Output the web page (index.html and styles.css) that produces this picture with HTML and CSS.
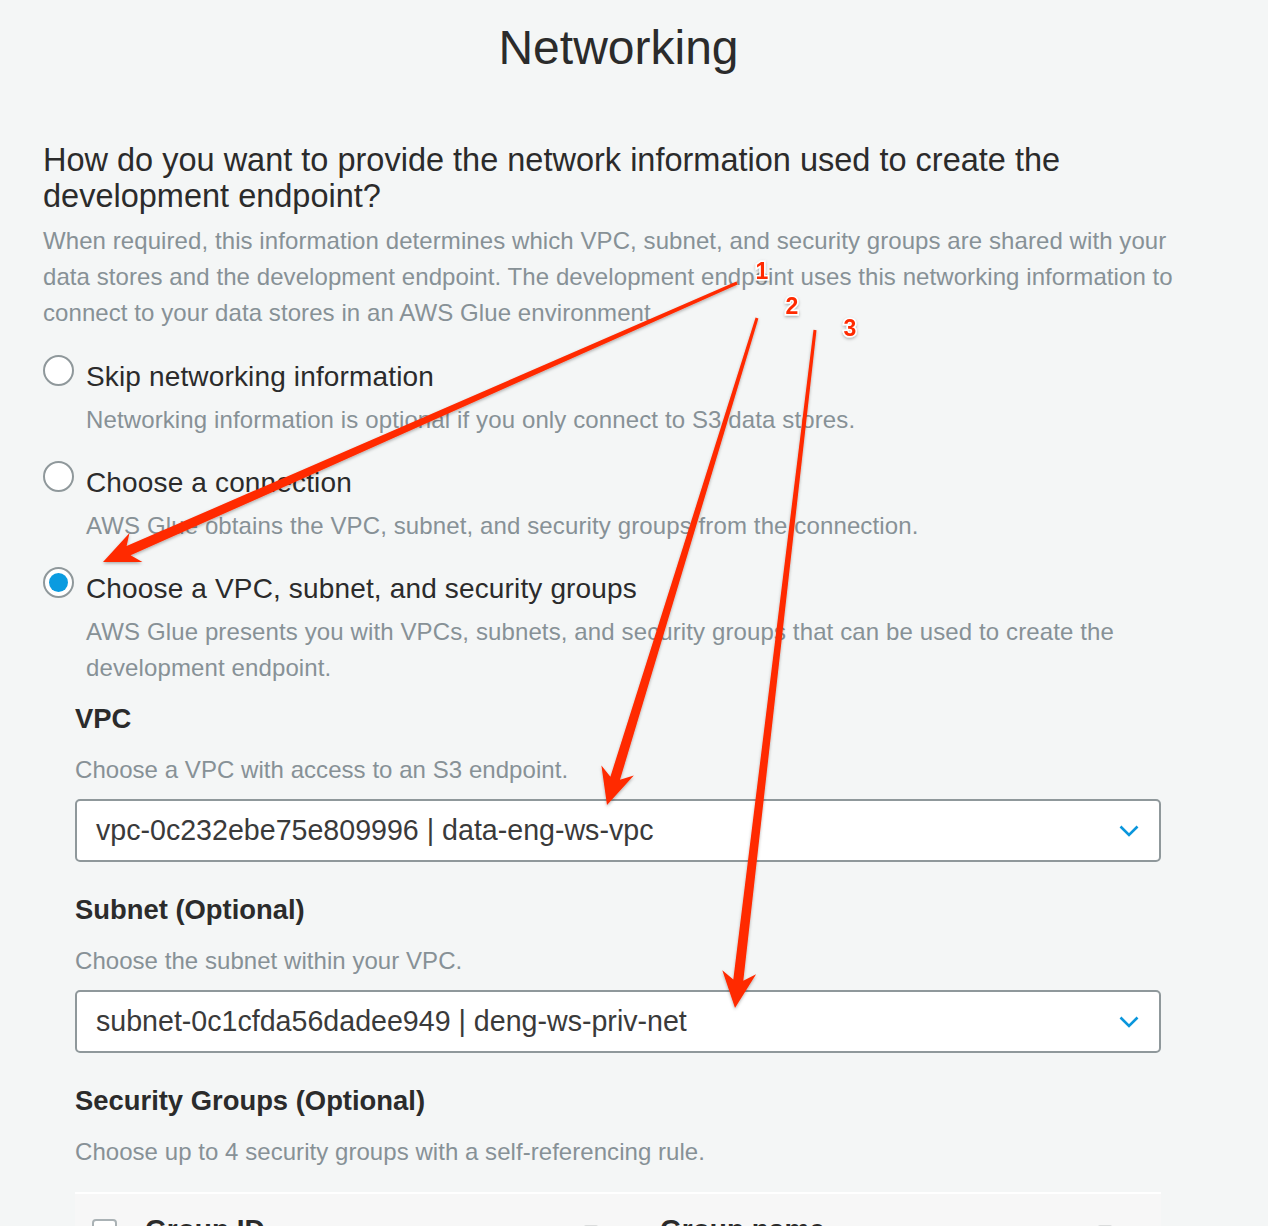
FILE: index.html
```html
<!DOCTYPE html>
<html lang="en">
<head>
<meta charset="utf-8">
<title>Networking</title>
<link rel="stylesheet" href="styles.css">
</head>
<body>
<div class="page">
  <div class="wrap">
    <h1 class="title">Networking</h1>
    <h2 class="question">How do you want to provide the network information used to create the development endpoint?</h2>
    <p class="lead">When required, this information determines which VPC, subnet, and security groups are shared with your data stores and the development endpoint. The development endpoint uses this networking information to connect to your data stores in an AWS Glue environment.</p>

    <div class="options">
      <div class="option">
        <span class="radio"></span>
        <div class="option-body">
          <div class="option-label">Skip networking information</div>
          <div class="option-desc">Networking information is optional if you only connect to S3 data stores.</div>
        </div>
      </div>
      <div class="option">
        <span class="radio"></span>
        <div class="option-body">
          <div class="option-label">Choose a connection</div>
          <div class="option-desc">AWS Glue obtains the VPC, subnet, and security groups from the connection.</div>
        </div>
      </div>
      <div class="option">
        <span class="radio checked"></span>
        <div class="option-body">
          <div class="option-label">Choose a VPC, subnet, and security groups</div>
          <div class="option-desc">AWS Glue presents you with VPCs, subnets, and security groups that can be used to create the development endpoint.</div>
        </div>
      </div>
    </div>

    <div class="fields">
      <div class="field">
        <div class="field-label">VPC</div>
        <div class="field-desc">Choose a VPC with access to an S3 endpoint.</div>
        <div class="select">
          <span class="select-value">vpc-0c232ebe75e809996 | data-eng-ws-vpc</span>
          <svg class="chevron" width="20" height="12" viewBox="0 0 20 12"><path d="M1.5 1.5 L10 10 L18.5 1.5" fill="none" stroke="#0a96dc" stroke-width="2.6"/></svg>
        </div>
      </div>
      <div class="field">
        <div class="field-label">Subnet (Optional)</div>
        <div class="field-desc">Choose the subnet within your VPC.</div>
        <div class="select">
          <span class="select-value">subnet-0c1cfda56dadee949 | deng-ws-priv-net</span>
          <svg class="chevron" width="20" height="12" viewBox="0 0 20 12"><path d="M1.5 1.5 L10 10 L18.5 1.5" fill="none" stroke="#0a96dc" stroke-width="2.6"/></svg>
        </div>
      </div>
      <div class="field">
        <div class="field-label">Security Groups (Optional)</div>
        <div class="field-desc">Choose up to 4 security groups with a self-referencing rule.</div>
        <div class="table">
          <div class="thead">
            <div class="th th-check"><span class="checkbox"></span></div>
            <div class="th th-id"><span>Group ID</span><span class="sort"></span></div>
            <div class="th th-name"><span>Group name</span><span class="sort"></span></div>
          </div>
        </div>
      </div>
    </div>
  </div>

  <svg class="annotations" width="1268" height="1226" viewBox="0 0 1268 1226">
    <defs>
      <filter id="sh" x="-10%" y="-10%" width="120%" height="120%">
        <feDropShadow dx="0" dy="1.5" stdDeviation="1.5" flood-color="#000" flood-opacity="0.3"/>
      </filter>
    </defs>
    <g fill="#ff2a00" filter="url(#sh)">
      <polygon points="736.4,281.6 126.6,546.1 129.5,532.9 103,562 142.4,562.1 130.6,555.3 737.6,284.4"/>
      <polygon points="755.6,317.6 610.4,776.7 601.4,765.6 607,805 633.8,775.6 620.0,779.7 758.4,318.4"/>
      <polygon points="813.5,329.8 733.3,979.6 722.3,970.3 735,1008 756.1,974.3 743.3,980.8 816.5,330.2"/>
    </g>
    <g class="num" filter="url(#sh)">
      <text x="762" y="279">1</text>
      <text x="792" y="314">2</text>
      <text x="850" y="336">3</text>
    </g>
  </svg>
</div>
</body>
</html>
```

FILE: styles.css
```css
* { box-sizing: border-box; }
html, body { margin: 0; padding: 0; }
body {
  background: #f4f6f6;
  font-family: "Liberation Sans", Arial, Helvetica, sans-serif;
  color: #2b2b2b;
}
.page {
  position: relative;
  width: 1268px;
  height: 1226px;
  overflow: hidden;
}
.wrap {
  padding: 0 74px 0 43px;
}
.title {
  margin: 0;
  padding-top: 20px;
  font-size: 48px;
  line-height: 56px;
  font-weight: 400;
  text-align: center;
  color: #2b2b2b;
}
.question {
  margin: 66px 0 0;
  font-size: 32.5px;
  line-height: 36px;
  font-weight: 400;
  color: #2b2b2b;
}
.lead {
  margin: 9px 0 0;
  font-size: 24px;
  line-height: 36px;
  letter-spacing: 0.08px;
  color: #879196;
}
.options {
  margin-top: 25px;
  display: flex;
  flex-direction: column;
  gap: 24px;
}
.option {
  display: flex;
  align-items: flex-start;
  gap: 12px;
}
.radio {
  flex: none;
  width: 31px;
  height: 31px;
  margin-top: -1px;
  border: 2px solid #8f989b;
  border-radius: 50%;
  background: #fff;
  position: relative;
}
.radio.checked::after {
  content: "";
  position: absolute;
  left: 4px;
  top: 4px;
  width: 19px;
  height: 19px;
  border-radius: 50%;
  background: #0a9be0;
}
.option-body {
  display: flex;
  flex-direction: column;
  gap: 7px;
  padding-top: 3px;
}
.option-label {
  font-size: 28px;
  line-height: 36px;
  letter-spacing: 0.15px;
  color: #2b2b2b;
}
.option-desc {
  font-size: 24px;
  line-height: 36px;
  letter-spacing: 0.12px;
  color: #879196;
}
.fields {
  margin: 15px 33px 0 32px;
  display: flex;
  flex-direction: column;
  gap: 30px;
}
.field {
  display: flex;
  flex-direction: column;
}
.field-label {
  font-size: 27.4px;
  line-height: 36px;
  font-weight: 700;
  color: #2b2b2b;
}
.field-desc {
  margin-top: 15px;
  font-size: 24px;
  line-height: 36px;
  letter-spacing: 0.05px;
  color: #879196;
}
.select {
  margin-top: 11px;
  height: 63px;
  background: #fff;
  border: 2px solid #8f989b;
  border-radius: 5px;
  display: flex;
  align-items: center;
  justify-content: space-between;
  padding: 0 20px 0 19px;
}
.select-value {
  font-size: 28.6px;
  color: #3a3a3a;
}
.chevron { display: block; }
.table {
  margin-top: 22px;
  border-top: 2px solid #ffffff;
  background: #f7f7f7;
}
.thead {
  display: flex;
  align-items: flex-start;
  padding-top: 21px;
  height: 60px;
}
.th {
  font-size: 28px;
  font-weight: 700;
  color: #2b2b2b;
  line-height: 30px;
  display: flex;
  justify-content: space-between;
}
.th-check { width: 70px; padding-left: 17px; padding-top: 4px; }
.th-id { width: 515px; padding-right: 62px; }
.th-name { width: 500px; padding-right: 48px; }
.checkbox {
  display: block;
  width: 25px;
  height: 25px;
  border: 2px solid #aab2b5;
  border-radius: 4px;
  background: #fff;
}
.sort {
  display: block;
  width: 14px;
  height: 14px;
  margin-top: 10px;
  background: #dadcdc;
  border-radius: 2px;
}
.annotations {
  position: absolute;
  left: 0;
  top: 0;
  pointer-events: none;
}
.num text {
  font-family: "Liberation Sans", Arial, sans-serif;
  font-size: 23px;
  font-weight: 700;
  fill: #ff2a00;
  stroke: #ffffff;
  stroke-width: 3px;
  paint-order: stroke;
  text-anchor: middle;
}
```
